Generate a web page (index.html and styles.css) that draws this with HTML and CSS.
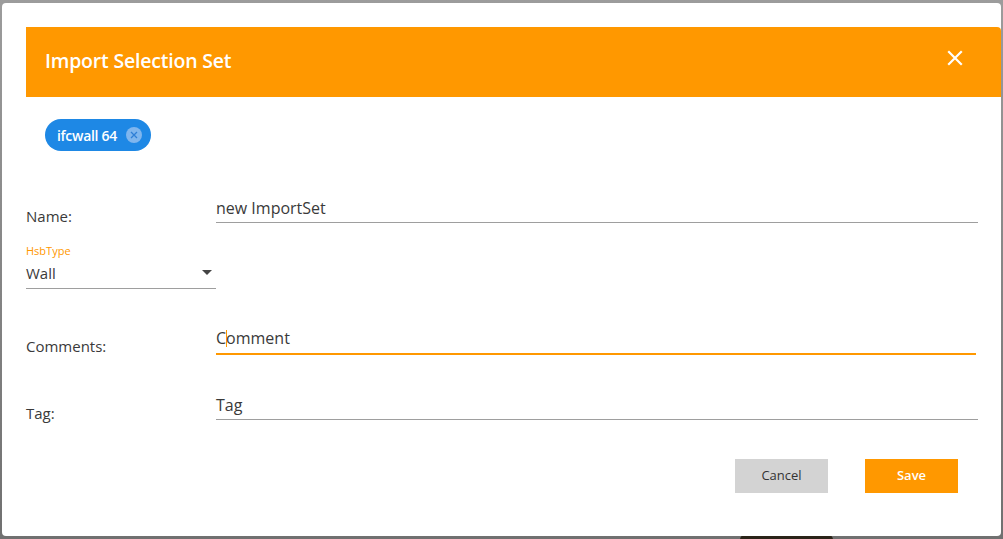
FILE: index.html
```html
<!DOCTYPE html>
<html>
<head>
<meta charset="utf-8">
<link rel="stylesheet" href="styles.css">
</head>
<body>
<div class="backdrop">
  <div class="dialog">
    <div class="header">
      <span class="title">Import Selection Set</span>
      <svg class="close" width="16" height="16" viewBox="0 0 16 16"><path d="M2 2L14 14M14 2L2 14" stroke="#fff" stroke-width="2.2" stroke-linecap="square"/></svg>
    </div>
    <div class="chips">
      <span class="chip">ifcwall 64
        <span class="chip-x"><svg width="16" height="16" viewBox="0 0 16 16"><circle cx="8" cy="8" r="8" fill="#7fb6ee"/><path d="M5 5L11 11M11 5L5 11" stroke="#2f7fd6" stroke-width="1.3"/></svg></span>
      </span>
    </div>
    <div class="row row-name">
      <div class="label">Name:</div>
      <div class="input">new ImportSet</div>
    </div>
    <div class="select-block">
      <div class="select-label">HsbType</div>
      <div class="select">
        <span>Wall</span>
        <svg class="caret" width="10" height="5" viewBox="0 0 10 5"><path d="M0 0H10L5 5Z" fill="#444"/></svg>
      </div>
    </div>
    <div class="row row-comments">
      <div class="label">Comments:</div>
      <div class="input focused"><span>C<span class="cursor"></span>omment</span></div>
    </div>
    <div class="row row-tag">
      <div class="label">Tag:</div>
      <div class="input">Tag</div>
    </div>
    <div class="actions">
      <button class="btn btn-cancel">Cancel</button>
      <button class="btn btn-save">Save</button>
    </div>
  </div>
  <div class="under"></div>
</div>
</body>
</html>
```
FILE: styles.css
```css
html, body {
  margin: 0;
  padding: 0;
}
body {
  width: 1003px;
  height: 539px;
  overflow: hidden;
  background: linear-gradient(#9c9c9c, #707070);
  font-family: "Open Sans", "Noto Sans", sans-serif;
  color: #3a3a3a;
}
.backdrop {
  position: relative;
  width: 1003px;
  height: 539px;
  padding-top: 3px;
  box-sizing: border-box;
}
.dialog {
  margin-left: 2px;
  width: 999px;
  height: 533px;
  background: #fff;
  border-radius: 4px;
  box-sizing: border-box;
  padding-top: 24px;
  display: flex;
  flex-direction: column;
  position: relative;
  z-index: 1;
}
.header {
  margin-left: 24px;
  height: 70px;
  background: #ff9800;
  display: flex;
  align-items: center;
  justify-content: space-between;
  padding-left: 19px;
  padding-right: 38px;
  border-top-right-radius: 4px;
}
.title {
  color: #fff;
  font-size: 19.5px;
  font-weight: 600;
  letter-spacing: -0.2px;
  margin-top: -3px;
}
.close {
  margin-top: -8px;
}
.chips {
  margin-top: 22px;
  margin-left: 43px;
  display: flex;
}
.chip {
  height: 32px;
  border-radius: 16px;
  background: #1e88e5;
  color: #fff;
  font-size: 14px;
  font-weight: 600;
  display: inline-flex;
  align-items: center;
  padding-left: 12px;
  padding-right: 9px;
  letter-spacing: -0.3px;
  box-sizing: border-box;
}
.chip-x {
  display: inline-flex;
  margin-left: 9px;
}
.row {
  display: flex;
  align-items: flex-start;
  margin-left: 24px;
  margin-right: 23px;
}
.row-name { margin-top: 42px; }
.row-comments { margin-top: 34px; }
.row-tag { margin-top: 34px; }
.label {
  width: 190px;
  flex: none;
  font-size: 15px;
  line-height: 20px;
  padding-top: 13px;
  color: #3a3a3a;
}
.input {
  flex: 1;
  font-size: 16px;
  line-height: 20px;
  padding: 5px 0 4px;
  border-bottom: 1px solid #9e9e9e;
  color: #3a3a3a;
}
.input.focused {
  border-bottom: 2px solid #ff9800;
  margin-right: 2px;
  padding-bottom: 5px;
}
.cursor {
  display: inline-block;
  width: 1px;
  height: 17px;
  background: #ff9800;
  vertical-align: -3px;
  margin: 0 -1px 0 0;
}
.select-block {
  margin-top: 17px;
  margin-left: 24px;
  width: 190px;
}
.select-label {
  font-size: 11px;
  line-height: 16px;
  color: #ff9800;
}
.select {
  font-size: 15px;
  line-height: 20px;
  padding: 4px 0 5px;
  border-bottom: 1px solid #9e9e9e;
  display: flex;
  justify-content: space-between;
  align-items: center;
}
.caret {
  margin-right: 4px;
  margin-top: -2px;
}
.actions {
  display: flex;
  justify-content: flex-end;
  gap: 37px;
  margin-top: 36px;
  margin-right: 43px;
}
.btn {
  width: 93px;
  height: 34px;
  border: none;
  border-radius: 0;
  font-family: "Open Sans", "Noto Sans", sans-serif;
  font-size: 13px;
  padding: 0 0 2px;
}
.btn-cancel {
  background: #d3d3d3;
  color: #333;
}
.btn-save {
  background: #ff9800;
  color: #fff;
  font-weight: 600;
}
.under {
  position: absolute;
  left: 740px;
  top: 534px;
  width: 93px;
  height: 10px;
  background: #2a2418;
  border-radius: 6px 6px 0 0;
}
```
